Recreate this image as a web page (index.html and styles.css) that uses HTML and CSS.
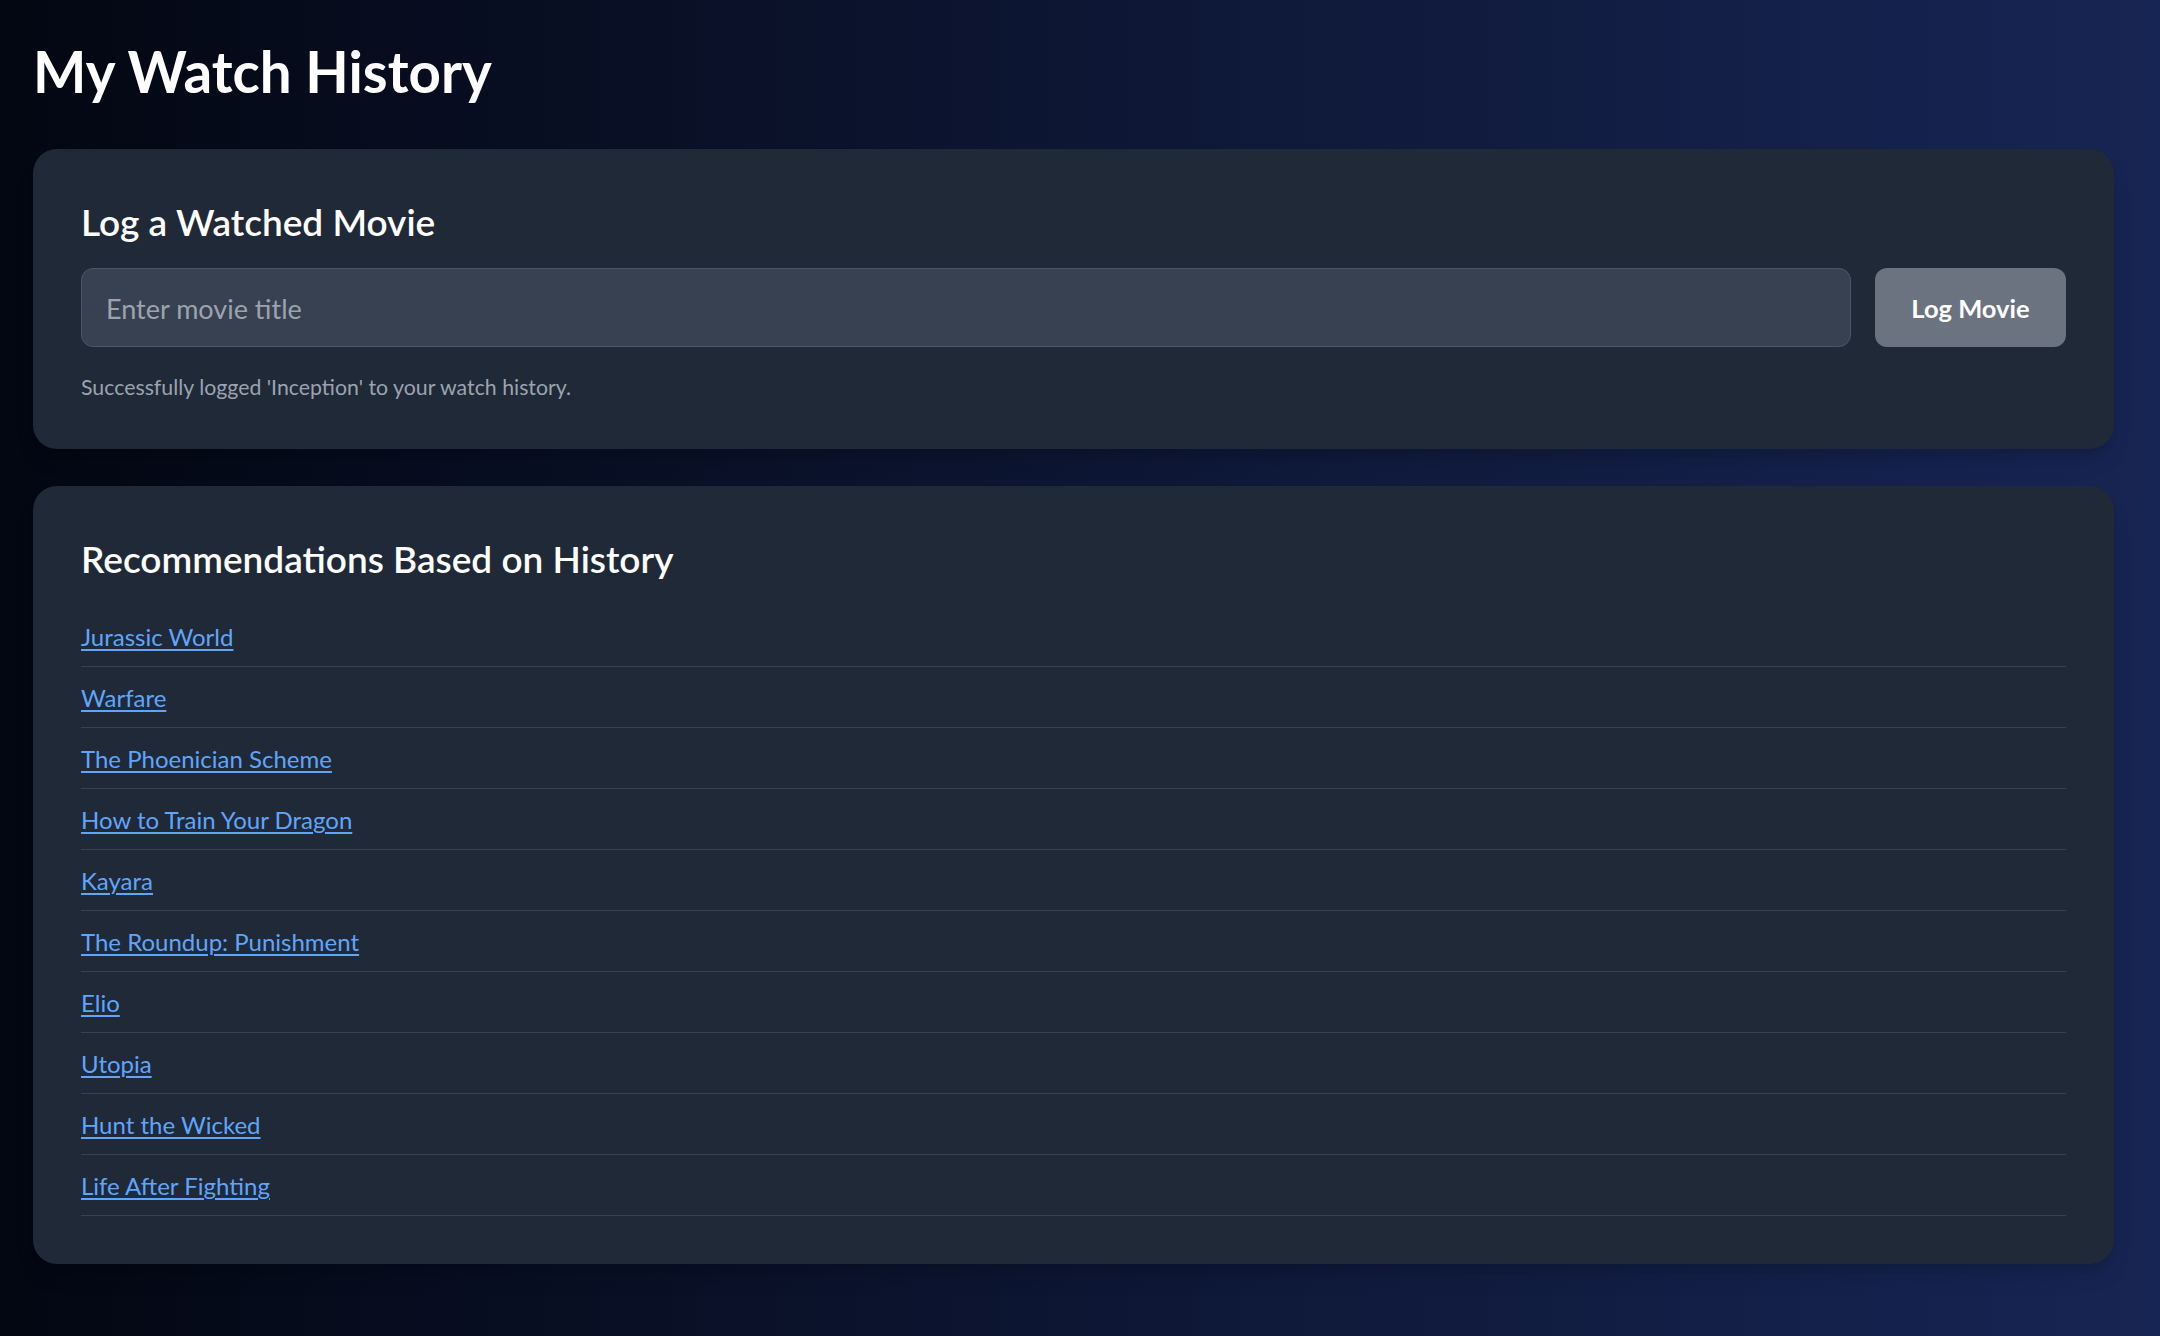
FILE: index.html
```html
<!DOCTYPE html>
<html lang="en">
<head>
<meta charset="utf-8">
<title>My Watch History</title>
<link rel="stylesheet" href="styles.css">
</head>
<body>
<main class="page">
  <h1 class="page-title">My Watch History</h1>

  <section class="card">
    <h2 class="card-title">Log a Watched Movie</h2>
    <form class="log-form" onsubmit="return false;">
      <input class="log-input" type="text" placeholder="Enter movie title">
      <button class="log-button" type="submit">Log Movie</button>
    </form>
    <p class="log-message">Successfully logged 'Inception' to your watch history.</p>
  </section>

  <section class="card card-recs">
    <h2 class="card-title">Recommendations Based on History</h2>
    <ul class="rec-list">
      <li class="rec-item"><a class="rec-link" href="#">Jurassic World</a></li>
      <li class="rec-item"><a class="rec-link" href="#">Warfare</a></li>
      <li class="rec-item"><a class="rec-link" href="#">The Phoenician Scheme</a></li>
      <li class="rec-item"><a class="rec-link" href="#">How to Train Your Dragon</a></li>
      <li class="rec-item"><a class="rec-link" href="#">Kayara</a></li>
      <li class="rec-item"><a class="rec-link" href="#">The Roundup: Punishment</a></li>
      <li class="rec-item"><a class="rec-link" href="#">Elio</a></li>
      <li class="rec-item"><a class="rec-link" href="#">Utopia</a></li>
      <li class="rec-item"><a class="rec-link" href="#">Hunt the Wicked</a></li>
      <li class="rec-item"><a class="rec-link" href="#">Life After Fighting</a></li>
    </ul>
  </section>
</main>
</body>
</html>
```

FILE: styles.css
```css
* {
  box-sizing: border-box;
}

html, body {
  margin: 0;
  padding: 0;
}

body {
  min-height: 100vh;
  background: linear-gradient(to right, #030712, #172554);
  font-family: Lato, "Open Sans", "Noto Sans", sans-serif;
  color: #ffffff;
}

.page {
  padding: 41px 46px 40px 33px;
}

.page-title {
  margin: 0 0 47px;
  font-size: 56.5px;
  line-height: 61px;
  font-weight: 700;
  color: #ffffff;
}

.card {
  background: #1f2937;
  border-radius: 24px;
  padding: 48px;
  box-shadow: 0 15px 22px -4px rgba(0, 0, 0, 0.12), 0 6px 9px -3px rgba(0, 0, 0, 0.08);
}

.card-recs {
  margin-top: 37px;
}

.card-title {
  margin: 0 0 22px;
  padding-top: 1px;
  font-size: 37px;
  line-height: 48px;
  font-weight: 600;
  color: #ffffff;
}

.card-recs .card-title {
  margin-bottom: 23px;
}

.log-form {
  display: flex;
  gap: 24px;
  margin: 0;
}

.log-input {
  flex: 1;
  height: 79px;
  padding: 2px 24px 0;
  background: #374151;
  border: 1px solid #4b5563;
  border-radius: 12px;
  color: #ffffff;
  font-family: inherit;
  font-size: 27px;
  outline: none;
}

.log-input::placeholder {
  color: #9ca3af;
}

.log-button {
  height: 79px;
  width: 191px;
  padding: 1px 0 0;
  background: #6b7280;
  border: none;
  border-radius: 12px;
  color: #ffffff;
  font-family: inherit;
  font-size: 25.5px;
  font-weight: 700;
  cursor: pointer;
}

.log-message {
  margin: 26px 0 0;
  font-size: 21.3px;
  line-height: 28px;
  color: #9ca3af;
}

.rec-list {
  list-style: none;
  margin: 0;
  padding: 0;
}

.rec-item {
  padding: 10px 0 8px;
  border-bottom: 1px solid #374151;
  font-size: 24px;
  line-height: 42px;
}

.rec-link {
  color: #60a5fa;
  text-decoration: underline;
  text-decoration-thickness: 2px;
  text-underline-offset: 3px;
}
```
